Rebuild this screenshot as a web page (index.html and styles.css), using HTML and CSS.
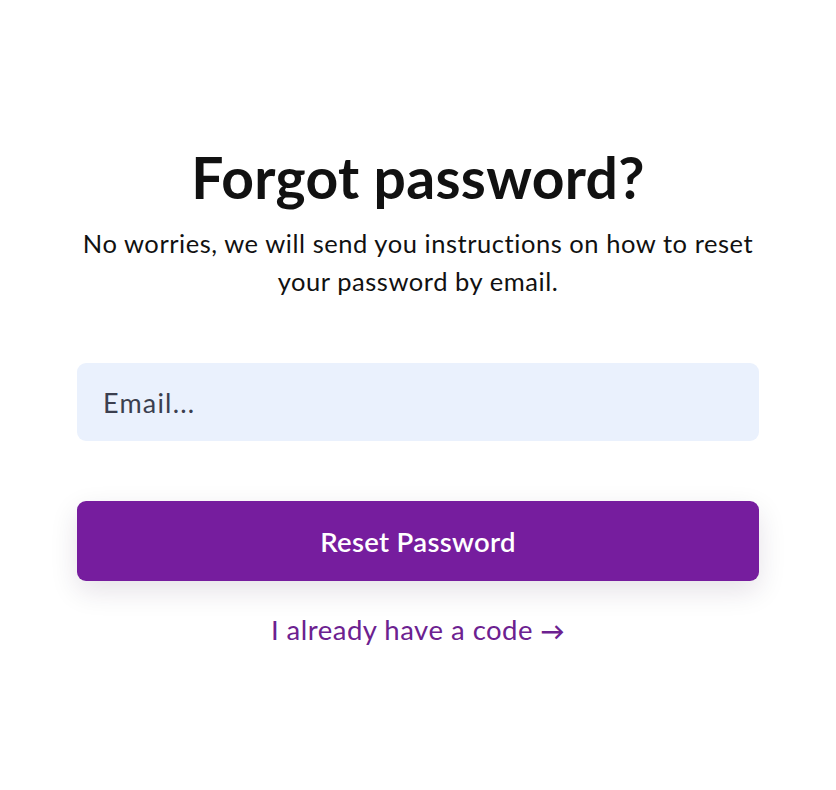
FILE: index.html
```html
<!DOCTYPE html>
<html lang="en">
<head>
<meta charset="utf-8">
<title>Forgot password</title>
<link rel="stylesheet" href="styles.css">
</head>
<body>
<main class="page">
  <section class="card">
    <h1 class="title">Forgot password?</h1>
    <p class="subtitle">No worries, we will send you instructions on how to reset your password by email.</p>
    <form class="form">
      <input class="email" type="email" placeholder="Email...">
      <button class="submit" type="button">Reset Password</button>
    </form>
    <a class="code-link" href="#">I already have a code <span class="arrow">&rarr;</span></a>
  </section>
</main>
</body>
</html>
```

FILE: styles.css
```css
* { box-sizing: border-box; }
html, body { margin: 0; padding: 0; background: #ffffff; }
body { font-family: "Lato", "Inter", "Noto Sans", sans-serif; color: #111111; }
.page { display: flex; justify-content: center; padding-top: 146px; }
.card { width: 682px; display: flex; flex-direction: column; align-items: center; }
.title { margin: 0; font-size: 57px; font-weight: 700; line-height: 62px; letter-spacing: 0.3px; color: #111; }
.subtitle { margin: 16px 0 0; font-size: 25.5px; line-height: 38px; letter-spacing: 0.55px; text-align: center; color: #111; font-weight: 400; }
.form { width: 100%; display: flex; flex-direction: column; gap: 60px; margin-top: 63px; }
.email { width: 100%; height: 78px; border: none; border-radius: 9px; background: #eaf1fd; padding: 0 26px; font-family: inherit; font-size: 27px; letter-spacing: 1.2px; color: #3b3f4f; outline: none; }
.email::placeholder { color: #3b3f4f; opacity: 1; }
.submit { width: 100%; height: 80px; border: none; border-radius: 9px; background: #761d9e; color: #fff; font-family: inherit; font-size: 27.5px; font-weight: 600; letter-spacing: 0.3px; box-shadow: 0 10px 28px rgba(40, 20, 60, 0.12); cursor: pointer; }
.code-link { margin-top: 32px; color: #6c2190; font-size: 27.5px; letter-spacing: 0.5px; text-decoration: none; line-height: 34px; }
.arrow { font-size: 24px; font-weight: 700; }
```
